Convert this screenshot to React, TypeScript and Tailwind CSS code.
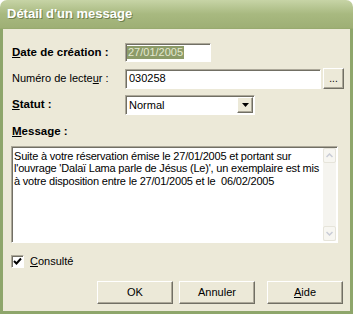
import React from 'react';

const raised =
    'bg-[#ece9d8] border border-t-white border-l-white border-r-[#716f64] border-b-[#716f64] shadow-[inset_-1px_-1px_0_#aca899]';

const sunken =
    'bg-white border border-t-[#aca899] border-l-[#aca899] border-r-white border-b-white shadow-[inset_1px_1px_0_#716f64]';

const Btn: React.FC<{ children: React.ReactNode; className?: string }> = ({ children, className }) => (
    <div className={`${raised} w-[76px] h-[23px] flex items-center justify-center text-[11px] text-black ${className ?? ''}`}>
        {children}
    </div>
);

const ScrollArrow: React.FC<{ up?: boolean }> = ({ up }) => (
    <div className="w-[13px] h-[15px] bg-[#f7f6f1] border border-[#e6e4da] rounded-[2px] flex items-center justify-center">
        <svg width="7" height="5" viewBox="0 0 7 5">
            <polyline
                points={up ? '0.5,4 3.5,1 6.5,4' : '0.5,1 3.5,4 6.5,1'}
                fill="none"
                stroke="#c9ccd6"
                strokeWidth="1.5"
            />
        </svg>
    </div>
);

export default function App() {
    return (
        <div className="w-[353px] h-[314px] flex flex-col font-['Liberation_Sans',Arial,sans-serif] text-black overflow-hidden bg-white">
            <div className="h-[29px] shrink-0 rounded-t-[7px] bg-gradient-to-b from-[#c7d4a6] via-[#a8b980] to-[#9eaf75] border-b border-[#98aa6f] flex items-center pl-[7px]">
                <span className="text-[13px] font-bold text-white [text-shadow:1px_1px_0_#6f7f4c]">Détail d'un message</span>
            </div>
            <div className="flex-1 bg-[#ece9d8] border-l-[3px] border-r-[3px] border-b-[3px] border-[#8ea66b] flex flex-col pt-[14px] text-[11px]">
                <div className="flex items-center h-[19px]">
                    <div className="w-[122px] pl-[9px] font-bold text-[11.5px]">
                        <span className="underline">D</span>ate de création :
                    </div>
                    <div className={`${sunken} w-[86px] h-[19px] flex items-center pl-[1px]`}>
                        <span className="bg-[#8c9b68] text-[#e3e8d0] leading-[13px] px-[1px]">27/01/2005</span>
                    </div>
                </div>
                <div className="flex items-center h-[21px] mt-[6px]">
                    <div className="w-[122px] pl-[9px]">
                        Numéro de lecte<span className="underline">u</span>r :
                    </div>
                    <div className={`${sunken} w-[196px] h-[20px] flex items-center pl-[3px]`}>030258</div>
                    <div className={`${raised} ml-[2px] w-[21px] h-[21px] flex items-center justify-center text-[10px] leading-none`}>...</div>
                </div>
                <div className="flex items-center h-[20px] mt-[6px]">
                    <div className="w-[122px] pl-[9px] font-bold text-[11.5px]">
                        <span className="underline">S</span>tatut :
                    </div>
                    <div className={`${sunken} w-[130px] h-[20px] flex items-center pl-[3px] pr-[1px]`}>
                        <span className="flex-1">Normal</span>
                        <div className={`${raised} w-[16px] h-[16px] flex items-center justify-center`}>
                            <svg width="7" height="4" viewBox="0 0 7 4">
                                <polygon points="0,0 7,0 3.5,4" fill="#000" />
                            </svg>
                        </div>
                    </div>
                </div>
                <div className="h-[14px] mt-[10px] pl-[9px] flex items-center font-bold text-[11.5px]">
                    <span className="underline">M</span>essage :
                </div>
                <div className={`${sunken} mt-[7px] ml-[8px] w-[327px] h-[97px] flex`}>
                    <div className="flex-1 pl-[2px] pt-[3px] leading-[12.3px] text-[11px] tracking-[-0.2px]">
                        Suite à votre réservation émise le 27/01/2005 et portant sur l'ouvrage 'Dalaï Lama parle de Jésus (Le)', un exemplaire est mis à votre disposition entre le 27/01/2005 et le&nbsp; 06/02/2005
                    </div>
                    <div className="w-[13px] mr-[1px] my-[1px] bg-[#f5f4ef] flex flex-col justify-between">
                        <ScrollArrow up />
                        <ScrollArrow />
                    </div>
                </div>
                <div className="h-[14px] mt-[11px] ml-[8px] flex items-center">
                    <div className={`${sunken} w-[13px] h-[13px] flex items-center justify-center`}>
                        <svg width="9" height="9" viewBox="0 0 9 9">
                            <polyline points="1,4 3.5,6.5 8,1.5" fill="none" stroke="#000" strokeWidth="2" />
                        </svg>
                    </div>
                    <span className="ml-[6px]">
                        <span className="underline">C</span>onsulté
                    </span>
                </div>
                <div className="flex mt-[13px] pl-[94px]">
                    <Btn>OK</Btn>
                    <Btn className="ml-[6px]">Annuler</Btn>
                    <Btn className="ml-[12px]">
                        <span>
                            <span className="underline">A</span>ide
                        </span>
                    </Btn>
                </div>
            </div>
        </div>
    );
}
